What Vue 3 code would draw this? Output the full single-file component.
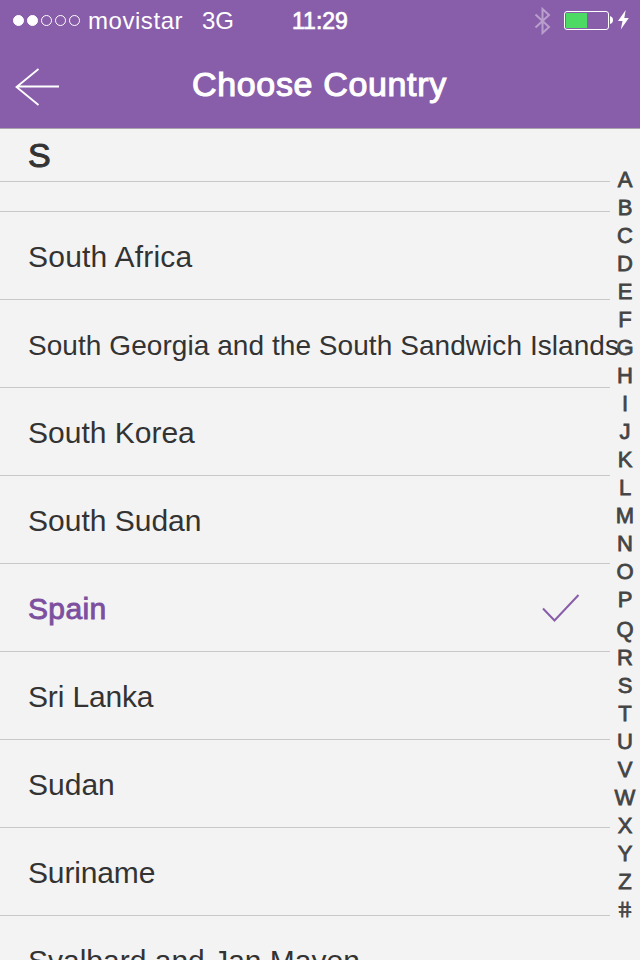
<script setup>
const countries = [
  { name: 'South Africa', fit: 'loose' },
  { name: 'South Georgia and the South Sandwich Islands', fit: 'long' },
  { name: 'South Korea' },
  { name: 'South Sudan' },
  { name: 'Spain', selected: true },
  { name: 'Sri Lanka', fit: 'tight' },
  { name: 'Sudan' },
  { name: 'Suriname', fit: 'tight' },
  { name: 'Svalbard and Jan Mayen' },
]
const letters = 'ABCDEFGHIJKLMNOPQRSTUVWXYZ#'.split('')
</script>

<template>
  <div class="screen">
    <header class="header">
      <div class="status">
        <div class="signal">
          <i v-for="n in 5" :key="n" class="dot" :class="{ full: n < 3 }"></i>
        </div>
        <span class="carrier">movistar</span>
        <span class="network">3G</span>
        <span class="time">11:29</span>
        <svg class="bluetooth" width="18" height="28" viewBox="0 0 18 28">
          <path d="M1.5 7.5 15 20 8.5 26V2L15 8 1.5 20.5" />
        </svg>
        <div class="battery"><div class="charge"></div></div>
        <svg class="cap" width="3" height="8" viewBox="0 0 3 8"><path d="M0 0Q3 1 3 4Q3 7 0 8Z" /></svg>
        <svg class="bolt" width="11" height="20" viewBox="0 0 11 20">
          <path d="M7.7 0 0 11H4.5L2.8 19.5 10.8 8H6.3Z" />
        </svg>
      </div>
      <div class="nav">
        <svg class="back" width="46" height="40" viewBox="0 0 46 40">
          <path d="M24.5 2 2.5 20 24.5 38M2.5 19.5H45" />
        </svg>
        <h1>Choose Country</h1>
      </div>
    </header>
    <main class="body">
      <section class="list">
        <div class="section-title">S</div>
        <div class="spacer"></div>
        <div v-for="c in countries" :key="c.name" class="row" :class="{ selected: c.selected }">
          <span class="name" :class="c.fit">{{ c.name }}</span>
          <svg v-if="c.selected" class="check" width="40" height="30" viewBox="0 0 40 30">
            <path d="M2 15.5 13.5 27.5 37.5 2" />
          </svg>
        </div>
      </section>
      <nav class="index">
        <span v-for="l in letters" :key="l" :class="{ gap: l === 'Q', hash: l === '#' }">{{ l }}</span>
      </nav>
    </main>
  </div>
</template>

<style>
body {
  margin: 0;
}
</style>

<style scoped>
.screen {
  width: 640px;
  height: 960px;
  overflow: hidden;
  background: #f3f3f3;
  color: #333;
  font-family: "Liberation Sans", Arial, sans-serif;
}
.header {
  height: 129px;
  box-sizing: border-box;
  background: #885eaa;
  border-bottom: 1px solid #a9a3ad;
  color: #fff;
}
.status {
  display: flex;
  align-items: center;
  height: 40px;
  padding-left: 13px;
  font-size: 24px;
  line-height: 40px;
  white-space: nowrap;
}
.status span {
  padding-top: 2px;
}
.signal {
  display: flex;
  gap: 3px;
  width: 75px;
}
.dot {
  box-sizing: border-box;
  width: 11px;
  height: 11px;
  border: 1px solid #fff;
  border-radius: 50%;
}
.dot.full {
  background: #fff;
}
.carrier {
  width: 114px;
  letter-spacing: 0.55px;
}
.network {
  width: 90px;
}
.time {
  width: 242px;
  font-size: 23px;
  -webkit-text-stroke: 0.7px #fff;
}
.bluetooth {
  margin-top: 1px;
}
.bluetooth path {
  fill: none;
  stroke: #b89fcc;
  stroke-width: 2;
}
.battery {
  box-sizing: border-box;
  width: 45px;
  height: 19px;
  margin-left: 12px;
  padding: 1px;
  border: 1px solid #fff;
  border-radius: 3px;
}
.charge {
  width: 21px;
  height: 15px;
  background: #4cd964;
}
.cap {
  margin-left: 1px;
}
.cap path,
.bolt path {
  fill: #fff;
}
.bolt {
  margin-left: 5px;
}
.nav {
  display: flex;
  align-items: center;
  height: 88px;
  padding-left: 14px;
}
.back {
  margin-top: 5px;
}
.back path {
  fill: none;
  stroke: #fff;
  stroke-width: 1.8;
}
h1 {
  margin: 0 0 0 132px;
  font-size: 34px;
  font-weight: 400;
  letter-spacing: 0.65px;
  line-height: 88px;
  white-space: nowrap;
  -webkit-text-stroke: 1.1px #fff;
}
.body {
  display: flex;
  height: 831px;
}
.list {
  flex: none;
  width: 610px;
}
.section-title {
  box-sizing: border-box;
  height: 53px;
  padding-left: 28px;
  border-bottom: 1px solid #c8c8c8;
  font-size: 34px;
  line-height: 53px;
  -webkit-text-stroke: 1px #333;
}
.spacer {
  height: 29px;
  border-bottom: 1px solid #c8c8c8;
}
.row {
  box-sizing: border-box;
  display: flex;
  align-items: center;
  justify-content: space-between;
  height: 88px;
  padding: 0 29px 0 28px;
  border-bottom: 1px solid #c8c8c8;
  font-size: 30px;
  line-height: 87px;
  white-space: nowrap;
}
.name {
  padding-top: 2px;
}
.loose {
  letter-spacing: 0.22px;
}
.tight {
  letter-spacing: -0.15px;
}
.long {
  padding-top: 3px;
  font-size: 28px;
  letter-spacing: 0.06px;
}
.selected {
  color: #7d4f9f;
}
.selected .name {
  letter-spacing: 0.35px;
  -webkit-text-stroke: 0.9px #7d4f9f;
}
.check path {
  fill: none;
  stroke: #885eaa;
  stroke-width: 2;
}
.index {
  display: flex;
  flex-direction: column;
  width: 30px;
  padding-top: 37px;
  color: #444;
  font-size: 22px;
  line-height: 28px;
  text-align: center;
  -webkit-text-stroke: 0.8px #444;
}
.index span {
  height: 28px;
}
.index .gap {
  margin-top: 2px;
}
.index .hash {
  transform: skewX(11deg);
}
</style>
